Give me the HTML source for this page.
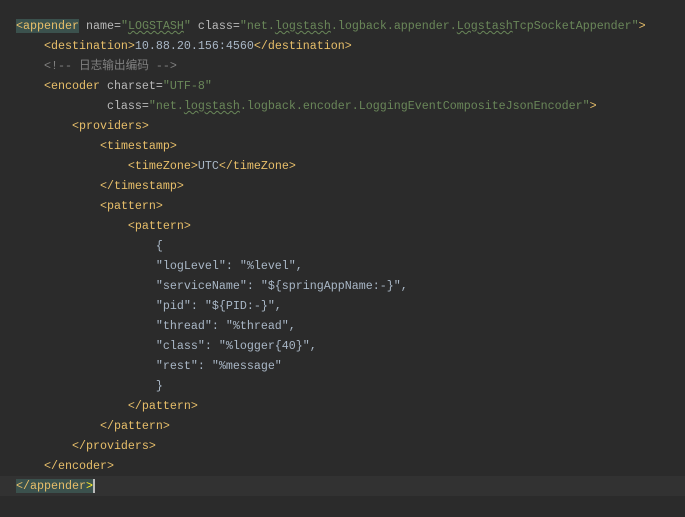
<html><head><style>
body{margin:0;background:#2b2b2b;width:685px;height:517px;overflow:hidden}
pre{margin:0;position:absolute;left:16px;top:16px;font:11.67px/20px "Liberation Mono","Noto Sans CJK SC",monospace;color:#a9b7c6}
.t{color:#e8bf6a}.a{color:#bababa}.v{color:#6a8759}.c{color:#808080}
.u{text-decoration:underline wavy #6a8759;text-decoration-thickness:1px}
.cur{position:absolute;left:0;top:476px;width:685px;height:20px;background:#323232}
.h{background:#3b514d}
</style></head><body>
<div class="cur"></div>
<pre><span class="t h">&lt;appender</span> <span class="a">name=</span><span class="v">"<span class="u">LOGSTASH</span>"</span> <span class="a">class=</span><span class="v">"net.<span class="u">logstash</span>.logback.appender.<span class="u">Logstash</span>TcpSocketAppender"</span><span class="t">&gt;</span>
    <span class="t">&lt;destination&gt;</span>10.88.20.156:4560<span class="t">&lt;/destination&gt;</span>
    <span class="c">&lt;!-- 日志输出编码 --&gt;</span>
    <span class="t">&lt;encoder</span> <span class="a">charset=</span><span class="v">"UTF-8"</span>
             <span class="a">class=</span><span class="v">"net.<span class="u">logstash</span>.logback.encoder.LoggingEventCompositeJsonEncoder"</span><span class="t">&gt;</span>
        <span class="t">&lt;providers&gt;</span>
            <span class="t">&lt;timestamp&gt;</span>
                <span class="t">&lt;timeZone&gt;</span>UTC<span class="t">&lt;/timeZone&gt;</span>
            <span class="t">&lt;/timestamp&gt;</span>
            <span class="t">&lt;pattern&gt;</span>
                <span class="t">&lt;pattern&gt;</span>
                    {
                    "logLevel": "%level",
                    "serviceName": "${springAppName:-}",
                    "pid": "${PID:-}",
                    "thread": "%thread",
                    "class": "%logger{40}",
                    "rest": "%message"
                    }
                <span class="t">&lt;/pattern&gt;</span>
            <span class="t">&lt;/pattern&gt;</span>
        <span class="t">&lt;/providers&gt;</span>
    <span class="t">&lt;/encoder&gt;</span>
<span class="t h">&lt;/appender<span style="color:#ffef28">&gt;</span></span><span style="border-left:2px solid #bbb"></span></pre>
</body></html>
